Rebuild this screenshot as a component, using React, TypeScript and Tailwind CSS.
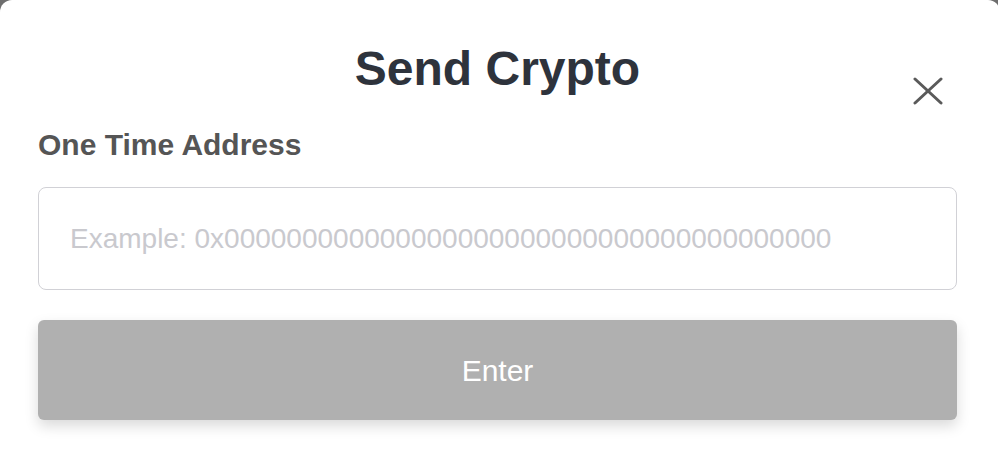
export default function App() {
  return (
    <main className="h-[464px] w-[998px] overflow-hidden bg-[#6e6e6e]" style={{ fontFamily: '"Liberation Sans", Arial, sans-serif' }}>
      <div className="h-[480px] w-[1000px] rounded-[12px] bg-white pl-[38px] pr-[43px] pt-[40px]">
        <header className="grid grid-cols-[1fr_auto_1fr] grid-rows-[58px] items-start">
          <div />
          <h1 className="text-[48px] leading-[58px] font-bold text-[#2e333c]">Send Crypto</h1>
          <div className="flex justify-end">
            <button className="mt-[37px] mr-[14px] text-[#5a5a5a]" aria-label="Close">
              <svg width="30" height="28" viewBox="0 0 30 28" fill="none" stroke="currentColor" strokeWidth="3" strokeLinecap="round">
                <path d="M2 2 L28 26" />
                <path d="M28 2 L2 26" />
              </svg>
            </button>
          </div>
        </header>

        <label className="mt-[30px] block text-[30px] leading-[34px] font-bold text-[#555555]">One Time Address</label>

        <input
          className="mt-[25px] block h-[103px] w-full rounded-[8px] border-[1.5px] border-[#d1d1d6] pl-[31px] text-[28px] text-[#333] outline-none placeholder:text-[#c9c9ce]"
          placeholder="Example: 0x000000000000000000000000000000000000000"
        />

        <button className="mt-[30px] flex h-[100px] w-full items-center justify-center rounded-[6px] bg-[#b0b0b0] text-[30px] text-white shadow-[0_6px_14px_rgba(0,0,0,0.15)]">
          Enter
        </button>
      </div>
    </main>
  )
}
